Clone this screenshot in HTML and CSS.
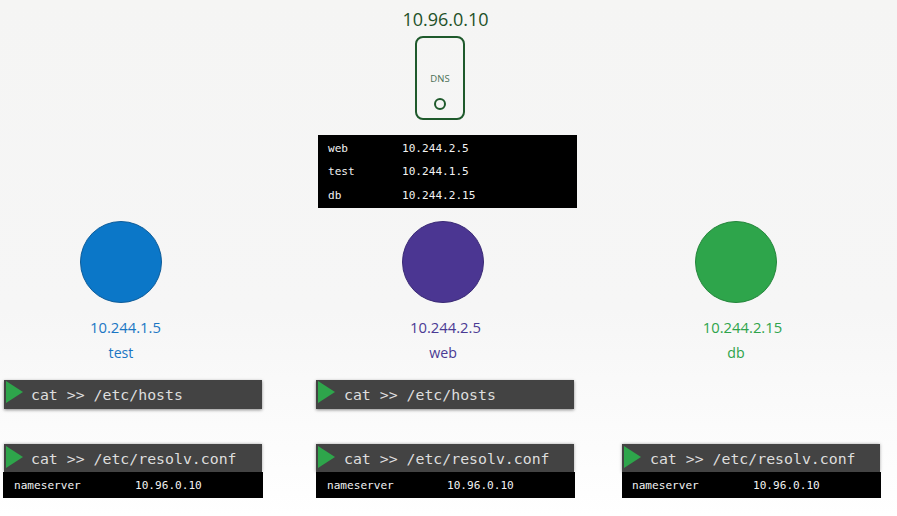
FILE: index.html
```html
<!DOCTYPE html>
<html lang="en">
<head>
<meta charset="utf-8">
<title>DNS</title>
<link rel="stylesheet" href="styles.css">
</head>
<body>
<main class="stage">
  <section class="dns">
    <div class="dns-ip">10.96.0.10</div>
    <div class="server">
      <span class="server-label">DNS</span>
      <span class="server-led"></span>
    </div>
    <div class="records">
      <div class="record"><span class="record-name">web</span><span>10.244.2.5</span></div>
      <div class="record"><span class="record-name">test</span><span>10.244.1.5</span></div>
      <div class="record"><span class="record-name">db</span><span>10.244.2.15</span></div>
    </div>
  </section>
  <section class="hosts">
    <article class="host host-test">
      <div class="pod"></div>
      <div class="pod-ip">10.244.1.5</div>
      <div class="pod-name">test</div>
      <div class="term term-hosts"><svg class="play" viewBox="0 0 17 22"><polygon points="0,0 17,11 0,22"/></svg><span>cat &gt;&gt; /etc/hosts</span></div>
      <div class="term term-resolv"><svg class="play" viewBox="0 0 17 22"><polygon points="0,0 17,11 0,22"/></svg><span>cat &gt;&gt; /etc/resolv.conf</span></div>
      <div class="ns"><span class="ns-key">nameserver</span><span>10.96.0.10</span></div>
    </article>
    <article class="host host-web">
      <div class="pod"></div>
      <div class="pod-ip">10.244.2.5</div>
      <div class="pod-name">web</div>
      <div class="term term-hosts"><svg class="play" viewBox="0 0 17 22"><polygon points="0,0 17,11 0,22"/></svg><span>cat &gt;&gt; /etc/hosts</span></div>
      <div class="term term-resolv"><svg class="play" viewBox="0 0 17 22"><polygon points="0,0 17,11 0,22"/></svg><span>cat &gt;&gt; /etc/resolv.conf</span></div>
      <div class="ns"><span class="ns-key">nameserver</span><span>10.96.0.10</span></div>
    </article>
    <article class="host host-db">
      <div class="pod"></div>
      <div class="pod-ip">10.244.2.15</div>
      <div class="pod-name">db</div>
      <div class="term term-hosts term-absent"></div>
      <div class="term term-resolv"><svg class="play" viewBox="0 0 17 22"><polygon points="0,0 17,11 0,22"/></svg><span>cat &gt;&gt; /etc/resolv.conf</span></div>
      <div class="ns"><span class="ns-key">nameserver</span><span>10.96.0.10</span></div>
    </article>
  </section>
</main>
</body>
</html>
```

FILE: styles.css
```css
* { box-sizing: border-box; }
html, body { margin: 0; height: 100%; overflow: hidden; }
body {
  background: linear-gradient(#f5f5f4 0%, #f6f6f6 60%, #ffffff 100%);
  font-family: "Open Sans", sans-serif;
}
.stage { width: 897px; height: 516px; padding-top: 7px; }

.dns { margin-left: 318px; width: 259px; display: flex; flex-direction: column; }
.dns-ip { width: 255px; text-align: center; font-size: 18px; line-height: 24px; color: #1e5128; }
.server {
  margin: 5px 0 0 97px; width: 50px; height: 84px;
  border: 2px solid #1f5a2c; border-radius: 8px;
  display: flex; flex-direction: column; align-items: center;
}
.server-label { margin-top: 34px; font-size: 9.5px; line-height: 14px; color: #4a6f55; }
.server-led { margin-top: 12px; width: 12px; height: 12px; border: 2px solid #1f5a2c; border-radius: 50%; }

.records {
  margin-top: 15px; height: 73px; background: #000; padding: 2px 0 0 10px;
  font: 11.1px/23.4px "DejaVu Sans Mono", monospace; color: #f2f2f2;
}
.record { display: flex; }
.record-name { width: 74px; }

.hosts { display: grid; grid-template-columns: 260px 260px 260px; column-gap: 53px; margin: 13px 0 0 3px; }
.hosts .host-db { margin-left: -7px; }
.host { display: flex; flex-direction: column; }
.pod { width: 82px; height: 82px; border-radius: 50%; border: 1px solid; }
.pod-ip { font-size: 14.8px; line-height: 20px; margin-top: 14px; text-align: center; }
.pod-name { font-size: 14.2px; line-height: 20px; margin-top: 6px; text-align: center; }

.host-test { color: #1a76c4; }
.host-test .pod { background: #0b77c8; border-color: #0e5c99; margin-left: 77px; }
.host-test .pod-ip { width: 245px; }
.host-test .pod-name { width: 236px; }
.host-web { color: #4a3a94; }
.host-web .pod { background: #4b3692; border-color: #3a2a75; margin-left: 86px; }
.host-web .pod-ip { width: 259px; }
.host-web .pod-name { width: 254px; }
.host-db { color: #2ea44b; }
.host-db .pod { background: #2ea54b; border-color: #25863c; margin-left: 73px; }
.host-db .pod-ip { width: 241px; }
.host-db .pod-name { width: 228px; }

.term {
  width: 258px; height: 29px; background: #434343; color: #dedede;
  box-shadow: 0 1px 3px rgba(0,0,0,.45);
  display: flex; align-items: center; padding-left: 2px; margin-left: 1px;
  font: 14.85px/29px "DejaVu Sans Mono", monospace;
}
.term span { padding-top: 2px; }
.term-hosts { margin-top: 17px; }
.term-hosts .play { margin-top: -6px; }
.term-absent { visibility: hidden; }
.term-resolv { margin-top: 35px; height: 28px; box-shadow: 0 0 3px rgba(0,0,0,.35); }
.term-resolv .play { margin-top: -3px; }
.play { width: 17px; height: 22px; fill: #2ea54b; margin-right: 8px; flex: none; }
.ns {
  width: 260px; height: 26px; background: #000; color: #f2f2f2; display: flex;
  align-items: center; padding: 2px 0 0 11px;
  font: 11.1px/24px "DejaVu Sans Mono", monospace;
}
.ns-key { width: 121px; }
.host-web .term, .host-db .term { margin-left: 0; }
.host-web .play, .host-db .play { margin-right: 9px; }
.host-web .ns { width: 259px; }
.host-web .ns-key { width: 120px; }
.host-db .ns { width: 259px; padding-left: 10px; }
```
